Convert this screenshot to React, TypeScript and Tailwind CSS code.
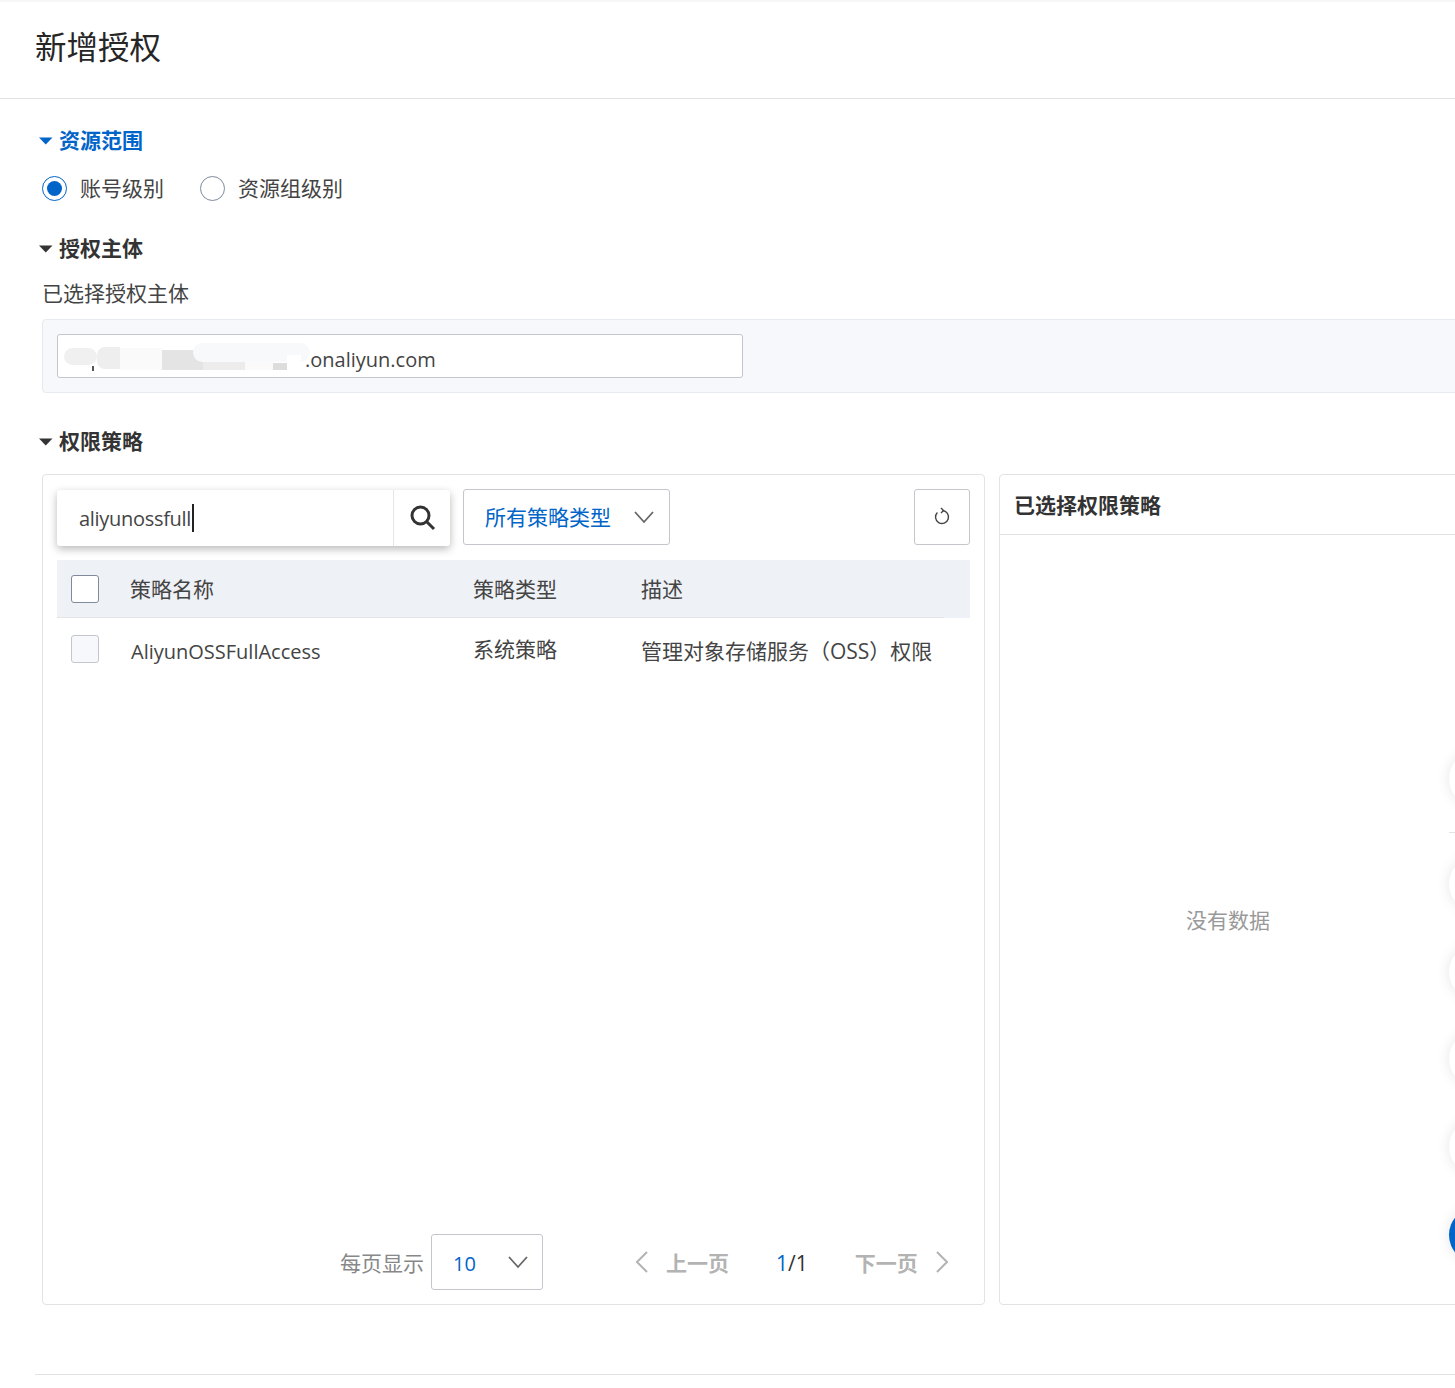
import React from "react";

const FONT = "font-['Open_Sans','Noto_Sans_CJK_SC',sans-serif]";

const Caret = ({ className }: { className: string }) => (
  <svg width="14" height="8" viewBox="0 0 14 8" className={className}>
    <path d="M0 0.5h13.5L6.75 7.5z" fill="currentColor" />
  </svg>
);

const ChevronDownIcon = () => (
  <svg width="20" height="14" viewBox="0 0 20 14" fill="none" stroke="#666" strokeWidth="1.8" className="shrink-0">
    <path d="M1 2l9 10 9-10" />
  </svg>
);

const PageArrow = ({ d, className }: { d: string; className: string }) => (
  <svg width="14" height="22" viewBox="0 0 14 22" fill="none" stroke="#b3b3b3" strokeWidth="2" className={className}>
    <path d={d} />
  </svg>
);

const SearchIcon = () => (
  <svg width="26" height="26" viewBox="0 0 26 26" fill="none" stroke="#333" strokeWidth="3">
    <circle cx="10.5" cy="10.5" r="8.5" />
    <path d="M16.5 16.5l7.5 7.5" />
  </svg>
);

const RefreshIcon = () => (
  <svg width="18" height="18" viewBox="0 0 18 18" fill="none" stroke="#444" strokeWidth="1.4" className="-translate-y-[1px]">
    <path d="M4.4 5.4A6.5 6.5 0 1 0 9.5 3.5" />
    <path d="M8 1l2.5 2.5L8 6" />
  </svg>
);

const SectionTitle = ({ text, active }: { text: string; active?: boolean }) => (
  <div className={`flex items-center gap-[6px] pl-[39px] text-[21px] leading-[30px] font-bold ${active ? "text-[#0064c8]" : "text-[#333]"}`}>
    <Caret className="shrink-0 translate-y-[1px]" />
    <span>{text}</span>
  </div>
);

const Radio = ({ checked }: { checked?: boolean }) => (
  <span className={`flex h-[25px] w-[25px] items-center justify-center rounded-full border bg-white ${checked ? "border-[#0064c8]" : "border-[#808a9b]"}`}>
    {checked && <span className="h-[15px] w-[15px] rounded-full bg-[#0064c8]" />}
  </span>
);

export default function App() {
  return (
    <div className={`relative h-[1388px] w-[1455px] overflow-hidden bg-white text-[#333] ${FONT}`}>
      {/* header */}
      <div className="flex h-[99px] items-start border-b border-[#e3e3e3] border-t-2 border-t-[#f7f7f7] pl-[35px] pt-[24px] text-[31.5px] leading-[42px] text-[#262626]">
        新增授权
      </div>

      <div className="pt-[26px]">
        <SectionTitle text="资源范围" active />
        {/* radios */}
        <div className="mt-[18px] flex h-[30px] items-center pl-[42px] text-[21px] text-[#444]">
          <Radio checked />
          <span className="ml-[13px] translate-y-[1px]">账号级别</span>
          <span className="ml-[36px]"><Radio /></span>
          <span className="ml-[13px] translate-y-[1px]">资源组级别</span>
        </div>

        <div className="mt-[30px]"><SectionTitle text="授权主体" /></div>
        <div className="mt-[15px] pl-[42px] text-[21px] leading-[30px] text-[#444]">已选择授权主体</div>

        {/* selected principal */}
        <div className="ml-[42px] mt-[11px] w-[1440px] rounded-[4px] border border-[#e6e9ee] bg-[#f6f8fb] px-[14px] py-[14px]">
          <div className="relative flex h-[44px] w-[686px] items-start overflow-hidden rounded-[3px] border border-[#c4c6cc] bg-white pl-[247px] pt-[9px] text-[20px] leading-[32px] text-[#444]">
            .onaliyun.com
            {/* smudged-out account name */}
            <span className="absolute left-[34px] top-[31px] h-[5px] w-[2px] bg-[#555]" />
            <span className="absolute left-[6px] top-[13px] h-[17px] w-[33px] rounded-full bg-[#f0f0f0]" />
            <span className="absolute left-[39px] top-[12px] h-[22px] w-[23px] rounded-l-[8px] bg-[#eeeeee]" />
            <span className="absolute left-[62px] top-[13px] h-[22px] w-[42px] bg-[#fafafa]" />
            <span className="absolute left-[104px] top-[15px] h-[20px] w-[41px] bg-[#e4e4e4]" />
            <span className="absolute left-[145px] top-[25px] h-[10px] w-[42px] bg-[#ececec]" />
            <span className="absolute left-[187px] top-[25px] h-[10px] w-[28px] bg-[#fafafa]" />
            <span className="absolute left-[215px] top-[28px] h-[7px] w-[14px] bg-[#dddddd]" />
            <span className="absolute left-[135px] top-[8px] h-[19px] w-[117px] rounded-full bg-[#f8f9fb]" />
            <span className="absolute left-[229px] top-[20px] h-[15px] w-[14px] bg-white" />
          </div>
        </div>

        <div className="mt-[33px]"><SectionTitle text="权限策略" /></div>

        {/* two panels */}
        <div className="ml-[42px] mt-[18px] flex w-[1500px] gap-[14px]">
          <div className="flex h-[831px] w-[943px] shrink-0 flex-col rounded-[4px] border border-[#e3e3e3] px-[14px] pt-[14px]">
            {/* toolbar */}
            <div className="flex h-[56px] items-stretch">
              <div className="flex h-[56px] w-[393px] translate-y-[1px] items-stretch rounded-[3px] bg-white shadow-[0_3px_8px_rgba(0,0,0,0.28)]">
                <div className="flex flex-1 items-center pl-[22px] text-[20px] tracking-[-0.3px] text-[#444]">
                  <span className="translate-y-[1px]">aliyunossfull</span>
                  <span className="ml-[1px] h-[28px] w-[2px] bg-[#222]" />
                </div>
                <div className="flex w-[57px] items-center justify-center border-l border-[#e6e6e6] pl-[1px]">
                  <SearchIcon />
                </div>
              </div>
              <div className="ml-[13px] flex w-[207px] items-center justify-between rounded-[3px] border border-[#c4c6cc] pl-[21px] pr-[15px] text-[21px] text-[#0064c8]">
                <span className="translate-y-[1px]">所有策略类型</span>
                <ChevronDownIcon />
              </div>
              <div className="ml-auto flex w-[56px] items-center justify-center rounded-[3px] border border-[#c4c6cc]">
                <RefreshIcon />
              </div>
            </div>

            {/* table */}
            <div className="mt-[15px] flex h-[58px] flex-col bg-[#eef1f6] text-[21px] text-[#444]">
              <div className="flex flex-1 items-center">
                <span className="ml-[14px] h-[28px] w-[28px] rounded-[3px] border border-[#808a9b] bg-white" />
                <span className="ml-[31px] w-[343px] translate-y-[1px]">策略名称</span>
                <span className="w-[168px] translate-y-[1px]">策略类型</span>
                <span className="translate-y-[1px]">描述</span>
              </div>
              <div className="h-px w-[887px] bg-[#e3e3e3]" />
            </div>
            <div className="flex h-[69px] items-center text-[21px] text-[#444]">
              <span className="ml-[14px] h-[28px] w-[28px] -translate-y-[4px] rounded-[3px] border border-[#c4c6cc] bg-[#f6f8fb]" />
              <span className="ml-[32px] w-[342px] -translate-y-[1px] text-[20px]">AliyunOSSFullAccess</span>
              <span className="w-[168px] -translate-y-[3px]">系统策略</span>
              <span className="-translate-y-[1px]">管理对象存储服务（OSS）权限</span>
            </div>

            {/* pagination */}
            <div className="mt-auto mb-[14px] flex h-[56px] items-center text-[21px]">
              <span className="ml-[283px] translate-y-[2px] text-[#888]">每页显示</span>
              <div className="ml-[7px] flex h-[56px] w-[112px] items-center justify-between rounded-[3px] border border-[#c4c6cc] pl-[21px] pr-[14px] text-[#0064c8]">
                <span className="translate-y-[2px] text-[20px]">10</span>
                <ChevronDownIcon />
              </div>
              <PageArrow d="M12 1L2 11l10 10" className="ml-[92px]" />
              <span className="ml-[17px] translate-y-[2px] font-bold text-[#b3b3b3]">上一页</span>
              <span className="ml-[47px] translate-y-[2px] text-[#333]"><span className="text-[#0064c8]">1</span>/1</span>
              <span className="ml-[47px] translate-y-[2px] font-bold text-[#b3b3b3]">下一页</span>
              <PageArrow d="M2 1l10 10L2 21" className="ml-[17px]" />
            </div>
          </div>

          {/* selected policies */}
          <div className="flex h-[831px] w-[520px] shrink-0 flex-col rounded-[4px] border border-[#e3e3e3]">
            <div className="flex h-[60px] items-center border-b border-[#e3e3e3] pl-[14px] text-[21px] font-bold text-[#333]">
              <span className="translate-y-[1px]">已选择权限策略</span>
            </div>
            <div className="flex flex-1 items-center pl-[186px] text-[21px] text-[#999]">
              <span className="translate-y-[1px]">没有数据</span>
            </div>
          </div>
        </div>

        <div className="ml-[35px] mt-[69px] border-t border-[#e3e3e3]" />
      </div>

      {/* floating buttons, cut off by the window edge */}
      <div className="absolute right-[-50px] top-[751px] h-[56px] w-[56px] rounded-full bg-white shadow-[0_0_14px_rgba(0,0,0,0.1)]" />
      <div className="absolute right-0 top-[832px] h-px w-[6px] bg-[#e3e3e3]" />
      <div className="absolute right-[-50px] top-[856px] h-[56px] w-[56px] rounded-full bg-white shadow-[0_0_14px_rgba(0,0,0,0.1)]" />
      <div className="absolute right-[-50px] top-[944px] h-[56px] w-[56px] rounded-full bg-white shadow-[0_0_14px_rgba(0,0,0,0.1)]" />
      <div className="absolute right-[-50px] top-[1031px] h-[56px] w-[56px] rounded-full bg-white shadow-[0_0_14px_rgba(0,0,0,0.1)]" />
      <div className="absolute right-[-50px] top-[1119px] h-[56px] w-[56px] rounded-full bg-white shadow-[0_0_14px_rgba(0,0,0,0.1)]" />
      <div className="absolute right-[-50px] top-[1207px] h-[56px] w-[56px] rounded-full bg-[#0064c8] shadow-[0_0_14px_rgba(0,0,0,0.1)]" />
    </div>
  );
}
